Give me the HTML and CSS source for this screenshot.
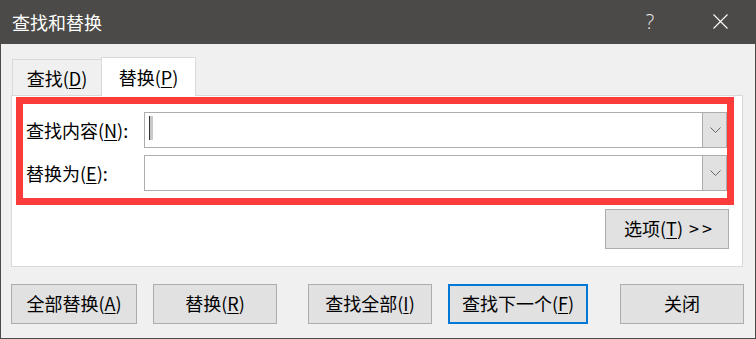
FILE: index.html
```html
<!DOCTYPE html>
<html lang="zh-CN">
<head>
<meta charset="utf-8">
<title>查找和替换</title>
<link rel="stylesheet" href="styles.css">
</head>
<body>
<div class="window">
  <div class="titlebar">
    <span class="title">查找和替换</span>
    <span class="help">?</span>
    <svg class="close" width="15" height="15" viewBox="0 0 15 15"><path d="M0.5 0.5 L14.5 14.5 M14.5 0.5 L0.5 14.5" stroke="#ffffff" stroke-width="1.1" fill="none"/></svg>
  </div>
  <div class="tabs">
    <div class="tab-edge"></div>
    <div class="tab">查找(<u>D</u>)</div>
    <div class="tab tab-active">替换(<u>P</u>)</div>
    <div class="tab-fill"></div>
  </div>
  <div class="panel">
    <div class="highlight">
      <div class="field-grid">
        <label class="label">查找内容(<u>N</u>):</label>
        <div class="combo">
          <span class="caret"></span>
          <span class="drop"><svg width="11" height="6" viewBox="0 0 11 6"><polyline points="0.5,0.5 5.5,5.5 10.5,0.5" fill="none" stroke="#666666" stroke-width="1"/></svg></span>
        </div>
        <label class="label">替换为(<u>E</u>):</label>
        <div class="combo">
          <span class="drop"><svg width="11" height="6" viewBox="0 0 11 6"><polyline points="0.5,0.5 5.5,5.5 10.5,0.5" fill="none" stroke="#666666" stroke-width="1"/></svg></span>
        </div>
      </div>
    </div>
    <div class="options-row">
      <button class="btn btn-options">选项(<u>T</u>)<span class="more">&gt;&gt;</span></button>
    </div>
  </div>
  <div class="actions">
    <button class="btn btn-wide">全部替换(<u>A</u>)</button>
    <button class="btn gap-s">替换(<u>R</u>)</button>
    <button class="btn gap-l">查找全部(<u>I</u>)</button>
    <button class="btn btn-default gap-s">查找下一个(<u>F</u>)</button>
    <button class="btn gap-l">关闭</button>
  </div>
</div>
</body>
</html>
```
FILE: styles.css
```css
* { box-sizing: border-box; }
html, body { margin: 0; padding: 0; }
body {
  width: 756px;
  height: 339px;
  overflow: hidden;
  font-family: "Noto Sans CJK SC", "Noto Sans", sans-serif;
  font-size: 18px;
  color: #000;
  background: #f0f0f0;
}
u { text-decoration: underline; text-underline-offset: 2px; text-decoration-thickness: 1px; }

.window {
  width: 756px;
  height: 339px;
  border: 1px solid #4b4a48;
  background: #f0f0f0;
  display: flex;
  flex-direction: column;
}

.titlebar {
  height: 43px;
  background: #4b4a48;
  display: flex;
  align-items: center;
  padding-left: 11px;
  padding-bottom: 2px;
  color: #fff;
}
.title { flex: 1; line-height: 1; }
.help {
  width: 20px;
  text-align: center;
  font-family: "Open Sans", "Noto Sans", sans-serif;
  font-weight: 300;
  font-size: 20px;
  line-height: 1;
  color: #ebebeb;
  margin-right: 53px;
}
.close { display: block; margin-right: 27px; }

.tabs {
  display: flex;
  align-items: flex-end;
  margin: 13px 12px 0 10px;
  height: 39px;
}
.tab-edge { width: 1px; height: 1px; border-bottom: 1px solid #d9d9d9; }
.tab {
  width: 89px;
  height: 37px;
  border-top: 1px solid #d9d9d9;
  border-left: 1px solid #d9d9d9;
  border-bottom: 1px solid #d9d9d9;
  display: flex;
  align-items: center;
  justify-content: center;
  line-height: 1;
}
.tab-active {
  width: 95px;
  height: 39px;
  background: #fff;
  border-right: 1px solid #d9d9d9;
  border-bottom: none;
  padding-bottom: 1px;
}
.tab-fill { flex: 1; height: 1px; border-bottom: 1px solid #d9d9d9; }

.panel {
  margin: 0 12px 0 10px;
  height: 171px;
  background: #fff;
  border: 1px solid #d9d9d9;
  border-top: none;
}

.highlight {
  margin: 1px 8px 0 4px;
  height: 108px;
  border: 7px solid #fc3b3b;
  padding: 8px 0 7px 0;
}
.field-grid {
  display: grid;
  grid-template-columns: 121px 1fr;
  grid-template-rows: 36px 36px;
  row-gap: 7px;
  align-items: center;
}
.label { padding-left: 3px; line-height: 1; padding-bottom: 1px; }
.combo {
  height: 36px;
  border: 1px solid #adadad;
  background: #fff;
  display: flex;
}
.caret {
  width: 4px;
  height: 24px;
  margin: 3px 0 0 4px;
  border-left: 1px solid #333;
  background: #c8c8c8;
}
.drop {
  margin-left: auto;
  width: 24px;
  border-left: 1px solid #adadad;
  background: #e1e1e1;
  display: flex;
  align-items: center;
  justify-content: center;
}
.drop svg { display: block; margin-left: 1px; }

.options-row {
  display: flex;
  justify-content: flex-end;
  margin-top: 4px;
  padding-right: 13px;
}

.btn {
  width: 124px;
  height: 40px;
  border: 1px solid #adadad;
  background: #e1e1e1;
  font-family: inherit;
  font-size: 18px;
  color: #000;
  line-height: 1;
  padding: 0 0 2px 0;
  margin: 0;
  display: flex;
  align-items: center;
  justify-content: center;
}
.btn-options { padding-left: 2px; }
.more { margin-left: 6px; letter-spacing: 3px; margin-right: -3px; }
.btn-wide { width: 126px; }
.btn-default { width: 140px; border: 2px solid #0078d7; }

.actions {
  display: flex;
  margin-top: 17px;
  padding-left: 10px;
}
.gap-s { margin-left: 16px; }
.gap-l { margin-left: 31px; }
.actions .btn:last-child { margin-left: 32px; }
```
